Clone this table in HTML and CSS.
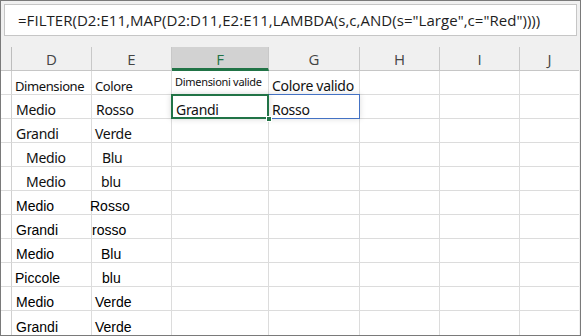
FILE: index.html
```html
<!DOCTYPE html>
<html>
<head>
<meta charset="utf-8">
<link rel="stylesheet" href="styles.css">
</head>
<body>
<div class="frame">
  <div class="fbar"><span class="ftext">=FILTER(D2:E11,MAP(D2:D11,E2:E11,LAMBDA(s,c,AND(s="Large",c="Red"))))</span></div>
  <div class="sheet">
    <div class="row head">
      <div class="c rh"></div>
      <div class="c d">D</div>
      <div class="c e">E</div>
      <div class="c f sel">F</div>
      <div class="c g">G</div>
      <div class="c h">H</div>
      <div class="c i">I</div>
      <div class="c j">J</div>
    </div>
    <div class="row ui">
      <div class="c rh"></div>
      <div class="c d"><span class="t p16 sm">Dimensione</span></div>
      <div class="c e"><span class="t p16 sm">Colore</span></div>
      <div class="c f"><span class="t p3 xs">Dimensioni valide</span></div>
      <div class="c g"><span class="t p3">Colore valido</span></div>
      <div class="c h"></div><div class="c i"></div><div class="c j"></div>
    </div>
    <div class="row ui">
      <div class="c rh"></div>
      <div class="c d"><span class="t p4">Medio</span></div>
      <div class="c e"><span class="t p4">Rosso</span></div>
      <div class="c f active"><span class="t p4">Grandi</span><span class="handle"></span></div>
      <div class="c g spill"><span class="t p3">Rosso</span></div>
      <div class="c h"></div><div class="c i"></div><div class="c j"></div>
    </div>
    <div class="row ui">
      <div class="c rh"></div>
      <div class="c d"><span class="t p4">Grandi</span></div>
      <div class="c e"><span class="t p3">Verde</span></div>
      <div class="c f"></div><div class="c g"></div><div class="c h"></div><div class="c i"></div><div class="c j"></div>
    </div>
    <div class="row ui">
      <div class="c rh"></div>
      <div class="c d"><span class="t p14">Medio</span></div>
      <div class="c e"><span class="t p10">Blu</span></div>
      <div class="c f"></div><div class="c g"></div><div class="c h"></div><div class="c i"></div><div class="c j"></div>
    </div>
    <div class="row ui">
      <div class="c rh"></div>
      <div class="c d"><span class="t p14">Medio</span></div>
      <div class="c e"><span class="t p9">blu</span></div>
      <div class="c f"></div><div class="c g"></div><div class="c h"></div><div class="c i"></div><div class="c j"></div>
    </div>
    <div class="row ar">
      <div class="c rh"></div>
      <div class="c d"><span class="t p4">Medio</span></div>
      <div class="c e"><span class="t p-2">Rosso</span></div>
      <div class="c f"></div><div class="c g"></div><div class="c h"></div><div class="c i"></div><div class="c j"></div>
    </div>
    <div class="row ar">
      <div class="c rh"></div>
      <div class="c d"><span class="t p4">Grandi</span></div>
      <div class="c e"><span class="t p0">rosso</span></div>
      <div class="c f"></div><div class="c g"></div><div class="c h"></div><div class="c i"></div><div class="c j"></div>
    </div>
    <div class="row ar">
      <div class="c rh"></div>
      <div class="c d"><span class="t p4">Medio</span></div>
      <div class="c e"><span class="t p9">Blu</span></div>
      <div class="c f"></div><div class="c g"></div><div class="c h"></div><div class="c i"></div><div class="c j"></div>
    </div>
    <div class="row ar">
      <div class="c rh"></div>
      <div class="c d"><span class="t p3">Piccole</span></div>
      <div class="c e"><span class="t p10">blu</span></div>
      <div class="c f"></div><div class="c g"></div><div class="c h"></div><div class="c i"></div><div class="c j"></div>
    </div>
    <div class="row ar">
      <div class="c rh"></div>
      <div class="c d"><span class="t p4">Medio</span></div>
      <div class="c e"><span class="t p3">Verde</span></div>
      <div class="c f"></div><div class="c g"></div><div class="c h"></div><div class="c i"></div><div class="c j"></div>
    </div>
    <div class="row ar last">
      <div class="c rh"></div>
      <div class="c d"><span class="t p4">Grandi</span></div>
      <div class="c e"><span class="t p3">Verde</span></div>
      <div class="c f"></div><div class="c g"></div><div class="c h"></div><div class="c i"></div><div class="c j"></div>
    </div>
  </div>
</div>
</body>
</html>
```
FILE: styles.css
```css
* { box-sizing: border-box; }
html, body { margin: 0; padding: 0; background: #ffffff; }
.frame {
  width: 581px;
  height: 336px;
  border: 1px solid #7a7a7a;
  background: #f0f0f0;
  overflow: hidden;
  display: flex;
  flex-direction: column;
}
.fbar {
  margin: 3px 3px 11px 3px;
  height: 32px;
  background: #ffffff;
  border: 1px solid #c6c6c6;
  display: flex;
  align-items: center;
  padding-left: 13px;
  white-space: nowrap;
}
.ftext {
  font-family: "Open Sans", "Noto Sans", sans-serif;
  font-size: 15px;
  color: #1e1e1e;
  letter-spacing: 0.04px;
}
.sheet { display: flex; flex-direction: column; }
.row { display: flex; height: 24px; }
.row.head { height: 24px; }
.c {
  height: 100%;
  border-right: 1px solid #dcdcdc;
  border-bottom: 1px solid #dcdcdc;
  position: relative;
  display: flex;
  align-items: flex-end;
  white-space: nowrap;
  background: #ffffff;
}
.rh { width: 11px; border-right-color: #d0d0d0; }
.d { width: 80px; }
.e { width: 80px; }
.f { width: 97px; }
.g { width: 91px; }
.h { width: 80px; }
.i { width: 80px; }
.j { width: 59px; border-right: none; }
.head .c {
  background: #f0f0f0;
  border-right-color: #c8c8c8;
  border-bottom-color: #c6c6c6;
  justify-content: center;
  align-items: center;
  font-family: "Open Sans", "Noto Sans", sans-serif;
  font-size: 15px;
  color: #444444;
  padding-top: 1px;
}
.head .rh { border-right-color: #bdbdbd; border-bottom-color: #c6c6c6; }
.head .c.sel {
  background: #d2d2d2;
  color: #217346;
  border-bottom: 3px solid #217346;
  padding-top: 3px;
}
.t {
  display: block;
  color: #111111;
  line-height: 16px;
  padding-bottom: 0px;
}
.ui .t { font-family: "Noto Sans", "Open Sans", sans-serif; font-size: 14px; letter-spacing: -0.3px; }
.ui .t.sm { font-size: 13px; letter-spacing: -0.4px; }
.ui .t.xs { font-size: 11px; letter-spacing: -0.3px; padding-bottom: 4px; }
.ar .t { font-family: "Liberation Sans", Arial, sans-serif; font-size: 14px; color: #000000; }
.p-2 { margin-left: -2px; }
.p0 { margin-left: 0px; }
.p3 { margin-left: 3px; }
.p4 { margin-left: 4px; }
.p9 { margin-left: 9px; }
.p10 { margin-left: 10px; }
.p14 { margin-left: 14px; }
.p16 { margin-left: 3px; }
.last .c { border-bottom: none; }
.active { z-index: 3; }
.spill { z-index: 2; }
.active::after {
  content: "";
  position: absolute;
  left: -1px;
  top: -1px;
  right: -1px;
  bottom: -1px;
  border: 2px solid #217346;
  box-shadow: 0 0 6px rgba(0, 0, 0, 0.16);
  pointer-events: none;
}
.handle {
  position: absolute;
  right: -4px;
  bottom: -4px;
  width: 6px;
  height: 6px;
  background: #217346;
  border: 1px solid #ffffff;
  z-index: 2;
}
.spill::after {
  content: "";
  position: absolute;
  left: -1px;
  top: -1px;
  right: -1px;
  bottom: -1px;
  border: 1px solid #4472c4;
  box-shadow: 0 0 6px rgba(0, 0, 0, 0.14);
  pointer-events: none;
}
```
